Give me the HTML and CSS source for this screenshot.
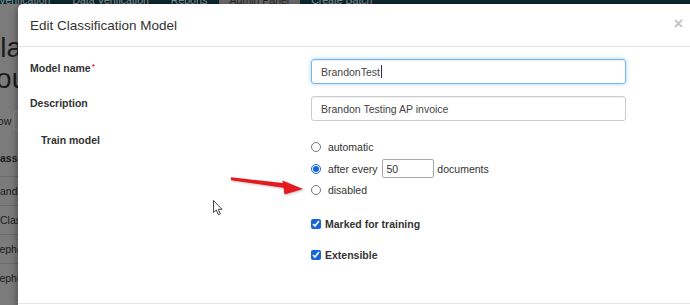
FILE: index.html
```html
<!DOCTYPE html>
<html lang="en">
<head>
    <meta charset="UTF-8">
    <meta name="viewport" content="width=device-width, initial-scale=1.0">
    <title>Edit Classification Model</title>
    <link rel="stylesheet" href="styles.css">
</head>
<body>

<div class="page">
    <nav class="topnav">
        <span class="navItem">Verification</span>
        <span class="navItem">Data Verification</span>
        <span class="navItem">Reports</span>
        <span class="navItem active">Admin Panel</span>
        <span class="navItem">Create Batch</span>
    </nav>

    <div class="content">
        <h1 class="pageTitle">Classification<br>Your Models</h1>
        <div class="lengthRow">Show <span class="fakeSelect"></span> entries</div>
        <table class="modelTable">
            <tr><th>Classification Model</th></tr>
            <tr><td>BrandonTest</td></tr>
            <tr><td>E-Classification</td></tr>
            <tr><td>StephenTest</td></tr>
            <tr><td>StephenModel</td></tr>
        </table>
    </div>
</div>

<div class="modal">
    <div class="modalHeader">
        <h4 class="modalTitle">Edit Classification Model</h4>
        <span class="closeBtn">&times;</span>
    </div>

    <div class="modalBody">
        <div class="formRow">
            <label class="fieldLabel">Model name<span class="required">*</span></label>
            <div class="textInput focused">BrandonTest<span class="caret"></span></div>
        </div>

        <div class="formRow">
            <label class="fieldLabel">Description</label>
            <div class="textInput">Brandon Testing AP invoice</div>
        </div>

        <div class="formRow">
            <label class="fieldLabel indented">Train model</label>
            <div>
                <div class="radioGroup">
                    <label class="option"><input type="radio" name="train"> automatic</label>
                    <label class="option"><input type="radio" name="train" checked> after every <span class="smallInput">50</span> documents</label>
                    <label class="option"><input type="radio" name="train"> disabled</label>
                </div>
                <div class="checks">
                    <label class="check"><input type="checkbox" checked> Marked for training</label>
                    <label class="check"><input type="checkbox" checked> Extensible</label>
                </div>
            </div>
        </div>
    </div>
    <div class="modalFooter"></div>
</div>

<!-- annotation arrow drawn on the screenshot -->
<svg class="arrow" width="690" height="305" viewBox="0 0 690 305">
    <polygon points="231,177.2 287,183.6 286.6,188.2 231,180.2" fill="#e5191e"/>
    <polygon points="282.5,180.5 303,189 284.5,194.5" fill="#e5191e"/>
</svg>

<svg class="cursor" width="12" height="17" viewBox="0 0 12 17">
    <path d="M0.5,0.5 L0.5,12.5 L3.3,10 L5.4,14.8 L7.3,14 L5.3,9.3 L9,9.3 Z" fill="#fff" stroke="#333" stroke-width="0.9" stroke-linejoin="round"/>
</svg>

</body>
</html>
```

FILE: styles.css
```css
/* Base */
body {
    margin: 0;
    width: 690px;
    height: 305px;
    overflow: hidden;
    position: relative;
    font-family: 'Liberation Sans', Arial, sans-serif;
    font-size: 10.5px;
    color: #333;
    background: #7b7b7b;
}

/* Dimmed page behind the dialog */
.page {
    height: 305px;
    overflow: hidden;
    color: #1b1b1b;
}

.topnav {
    display: flex;
    height: 4px;
    overflow: hidden;
    background: #0c2730;
}

.navItem {
    display: block;
    height: 4px;
    padding: 0 11px;
    line-height: 0;
    color: #8a9599;
    white-space: nowrap;
}

.navItem:first-child {
    margin-left: -12px;
}

.navItem.active {
    background: #6a6a6a;
    color: #222;
}

.pageTitle {
    margin: 28px 0 0 -20px;
    font-size: 28px;
    line-height: 31px;
    font-weight: normal;
    white-space: nowrap;
}

.lengthRow {
    display: flex;
    align-items: center;
    margin: 17px 0 0 -15px;
    height: 20px;
    white-space: nowrap;
}

.fakeSelect {
    display: inline-block;
    width: 40px;
    height: 18px;
    margin: 0 4px 0 2px;
    border: 1px solid #8c8c8c;
    border-radius: 3px;
    background: #7e7e7e;
}

.modelTable {
    margin: 21px 0 0 -10.5px;
    border-collapse: collapse;
    white-space: nowrap;
}

.modelTable th {
    text-align: left;
    height: 24px;
    padding: 0;
    vertical-align: top;
}

.modelTable td {
    height: 28px;
    padding: 0;
    border-top: 1px solid #6c6c6c;
}

/* Dialog */
.modal {
    position: absolute;
    left: 18px;
    top: 4px;
    width: 677px;
    height: 301px;
    overflow: hidden;
    background: #fff;
    border-radius: 5px 5px 0 0;
    box-shadow: 0 3px 9px rgba(0, 0, 0, 0.5);
}

.modalHeader {
    display: flex;
    justify-content: space-between;
    align-items: center;
    height: 42px;
    padding: 0 12px;
    border-bottom: 1px solid #e5e5e5;
}

.modalTitle {
    margin: 0;
    font-size: 13.5px;
    font-weight: normal;
    color: #333;
    line-height: 1;
    padding-top: 2px;
}

.closeBtn {
    font-size: 16px;
    font-weight: bold;
    color: #c4c4c4;
    line-height: 1;
    margin-top: -2px;
}

.modalBody {
    padding: 12px 12px 40.5px;
}

.formRow {
    display: grid;
    grid-template-columns: 281px 315px;
    margin-bottom: 12px;
}

.formRow:last-child {
    margin-bottom: 0;
}

.fieldLabel {
    font-weight: bold;
    line-height: 15px;
    color: #333;
}

.fieldLabel.indented {
    padding-left: 11px;
}

.required {
    color: #d9221c;
    font-size: 8px;
    vertical-align: 3px;
    margin-left: 1px;
}

.textInput {
    box-sizing: border-box;
    height: 25px;
    display: flex;
    align-items: center;
    padding: 0 9px;
    border: 1px solid #ccc;
    border-radius: 3px;
    box-shadow: inset 0 1px 1px rgba(0, 0, 0, 0.075);
    color: #444;
}

.textInput.focused {
    border-color: #79b7eb;
    box-shadow: inset 0 1px 1px rgba(0, 0, 0, 0.075), 0 0 4px rgba(102, 175, 233, 0.6);
}

.caret {
    display: inline-block;
    width: 1px;
    height: 13px;
    margin-left: 1px;
    background: #333;
}

/* Radios and checkboxes */
.radioGroup {
    padding-top: 3.5px;
}

.option {
    display: flex;
    align-items: center;
    height: 21.5px;
    color: #333;
    white-space: pre;
}

.option input,
.check input {
    width: 10px;
    height: 10px;
    margin: 0 4px 0 0;
    accent-color: #1565d8;
}

.smallInput {
    box-sizing: border-box;
    display: inline-flex;
    align-items: center;
    width: 52px;
    height: 19px;
    margin: 0 0 0 2px;
    padding-left: 3px;
    border: 1px solid #a9a9a9;
    border-radius: 2px;
    color: #333;
}

.checks {
    margin-top: 15.5px;
}

.check {
    display: flex;
    align-items: center;
    height: 15px;
    font-weight: bold;
    color: #333;
}

.check + .check {
    margin-top: 16px;
}

.modalFooter {
    border-top: 1px solid #e5e5e5;
}

/* Screenshot annotations */
.arrow {
    position: absolute;
    left: 0;
    top: 0;
    filter: drop-shadow(1px 1px 1px rgba(0, 0, 0, 0.25));
}

.cursor {
    position: absolute;
    left: 213px;
    top: 200px;
}
```
